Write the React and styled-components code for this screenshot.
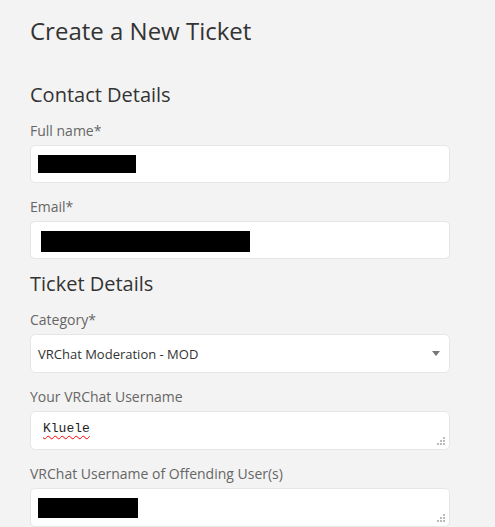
import React from "react";
import styled, { createGlobalStyle } from "styled-components";

const GlobalStyle = createGlobalStyle`
  html, body {
    margin: 0;
    padding: 0;
    background: #f3f3f3;
    font-family: "Open Sans", "Liberation Sans", sans-serif;
  }
`;

const Page = styled.div`
  padding: 14px 0 0 30px;
  width: 450px;
  height: 527px;
  overflow: hidden;
  box-sizing: border-box;
`;

const Title = styled.h1`
  margin: 0 0 35px;
  font-size: 24px;
  font-weight: 400;
  line-height: 34px;
  color: #333;
`;

const Section = styled.section`
  display: flex;
  flex-direction: column;
  gap: 14px;
  & + & {
    margin-top: 13px;
  }
`;

const SectionTitle = styled.h2`
  margin: 0;
  font-size: 20px;
  font-weight: 400;
  line-height: 24px;
  color: #333;
`;

const Field = styled.div``;

const Label = styled.label`
  display: block;
  font-size: 14px;
  line-height: 20px;
  color: #666;
  margin-bottom: 4px;
`;

const Box = styled.div`
  position: relative;
  box-sizing: border-box;
  height: ${(p) => p.$h || 38}px;
  background: #fff;
  border: 1px solid #e6e6e6;
  border-radius: 5px;
  display: flex;
  align-items: ${(p) => (p.$top ? "flex-start" : "center")};
  padding: ${(p) => (p.$top ? "9px" : "0")} ${(p) => p.$pad || 7}px 0;
`;

const Redact = styled.div`
  background: #000;
  width: ${(p) => p.$w}px;
  height: ${(p) => p.$hh}px;
  margin-top: ${(p) => p.$mt || 0}px;
`;

const SelectText = styled.span`
  font-size: 13px;
  color: #333;
  flex: 1;
`;

const Caret = styled.span`
  width: 0;
  height: 0;
  border-left: 4px solid transparent;
  border-right: 4px solid transparent;
  border-top: 5px solid #777;
  margin-right: 2px;
`;

const Mono = styled.span`
  font-family: "Liberation Mono", "Courier New", monospace;
  font-size: 13px;
  line-height: 16px;
  color: #222;
  text-decoration: underline wavy red;
  text-decoration-thickness: 1px;
  text-underline-offset: 3px;
`;

const Grip = styled.svg`
  position: absolute;
  right: 4px;
  bottom: 4px;
`;

const ResizeGrip = () => (
  <Grip width="8" height="8" viewBox="0 0 8 8">
    <rect x="6" y="0" width="2" height="2" fill="#bbb" />
    <rect x="3" y="3" width="2" height="2" fill="#bbb" />
    <rect x="6" y="3" width="2" height="2" fill="#bbb" />
    <rect x="0" y="6" width="2" height="2" fill="#bbb" />
    <rect x="3" y="6" width="2" height="2" fill="#bbb" />
    <rect x="6" y="6" width="2" height="2" fill="#bbb" />
  </Grip>
);

export default function App() {
  return (
    <>
      <GlobalStyle />
      <Page>
        <Title>Create a New Ticket</Title>

        <Section>
          <SectionTitle>Contact Details</SectionTitle>
          <Field>
            <Label>Full name*</Label>
            <Box>
              <Redact $w={98} $hh={18} $mt={-1} />
            </Box>
          </Field>
          <Field>
            <Label>Email*</Label>
            <Box $pad={10}>
              <Redact $w={209} $hh={21} $mt={2} />
            </Box>
          </Field>
        </Section>

        <Section>
          <SectionTitle>Ticket Details</SectionTitle>
          <Field>
            <Label>Category*</Label>
            <Box $h={39}>
              <SelectText>VRChat Moderation - MOD</SelectText>
              <Caret />
            </Box>
          </Field>
          <Field>
            <Label>Your VRChat Username</Label>
            <Box $h={39} $top $pad={12}>
              <Mono>Kluele</Mono>
              <ResizeGrip />
            </Box>
          </Field>
          <Field>
            <Label>VRChat Username of Offending User(s)</Label>
            <Box $h={39} $top>
              <Redact $w={100} $hh={20} />
              <ResizeGrip />
            </Box>
          </Field>
        </Section>
      </Page>
    </>
  );
}
